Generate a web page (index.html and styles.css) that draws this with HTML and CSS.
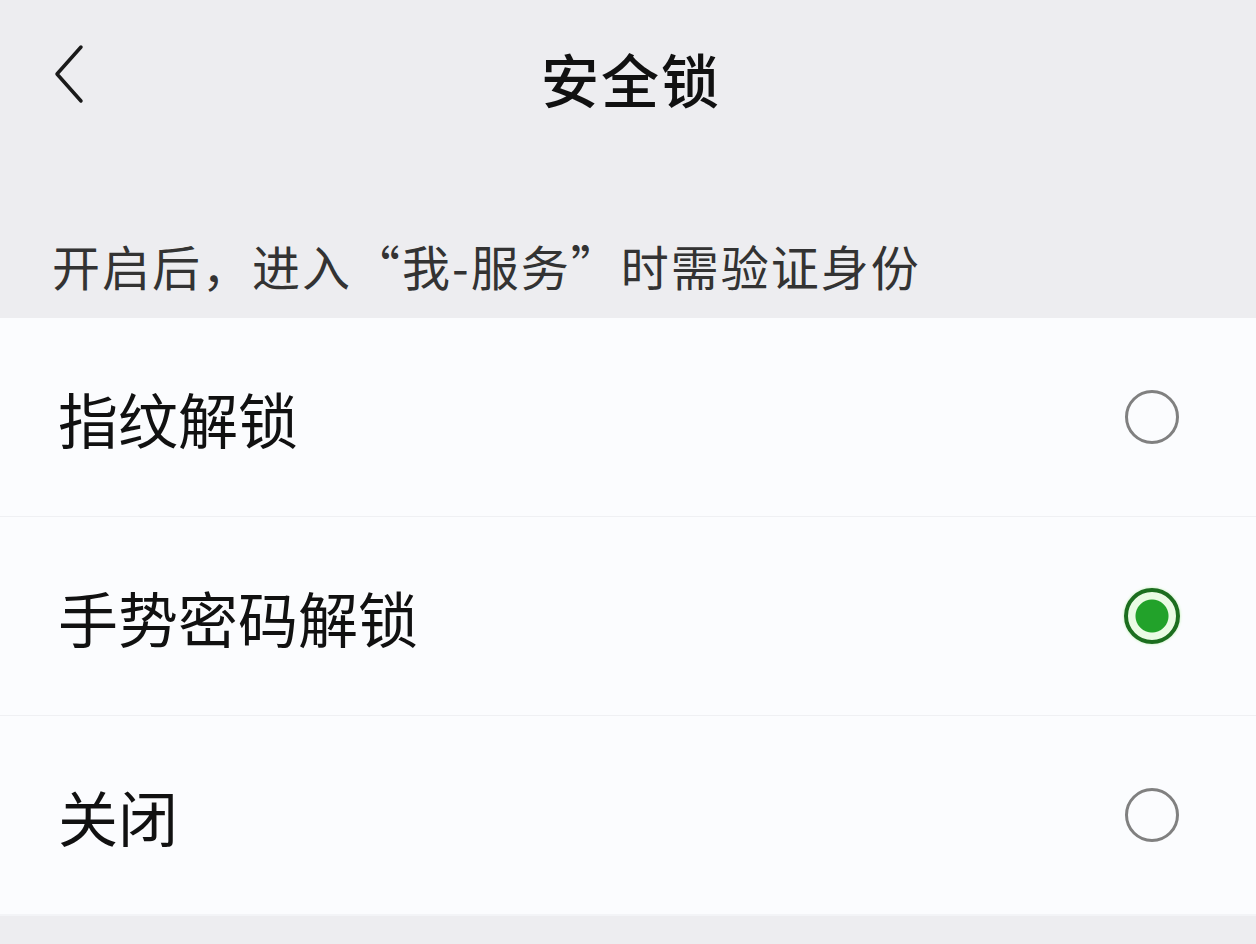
FILE: index.html
```html
<!DOCTYPE html>
<html lang="zh-CN">
<head>
    <meta charset="UTF-8">
    <title>安全锁</title>
    <link rel="stylesheet" href="styles.css">
</head>
<body>

    <header class="nav">
        <svg class="back" width="40" height="64" viewBox="0 0 40 64">
            <path d="M32 5 L8 32 L32 59" fill="none" stroke="#1a1a1a" stroke-width="3.5" stroke-linecap="round" stroke-linejoin="round"/>
        </svg>
        <h1 class="title">安全锁</h1>
    </header>

    <div class="hint">开启后，进入<span class="fw">“</span>我-服务<span class="fw">”</span>时需验证身份</div>

    <ul class="options">
        <li class="option">
            <span class="label">指纹解锁</span>
            <span class="radio"></span>
        </li>
        <li class="option">
            <span class="label">手势密码解锁</span>
            <span class="radio checked"></span>
        </li>
        <li class="option">
            <span class="label">关闭</span>
            <span class="radio"></span>
        </li>
    </ul>

</body>
</html>
```

FILE: styles.css
```css
body {
    margin: 0;
    background-color: #ededf0;
    font-family: "Noto Sans CJK SC", "Noto Sans", sans-serif;
    color: #111;
}
.nav {
    height: 155px;
    display: flex;
    align-items: center;
    justify-content: center;
    position: relative;
}
.back {
    position: absolute;
    left: 49px;
    top: 42px;
}
.title {
    margin: 0 0 0 6px;
    font-size: 58px;
    font-weight: 500;
    letter-spacing: 2px;
    color: #111;
}
.hint {
    height: 163px;
    box-sizing: border-box;
    padding: 80px 0 0 52px;
    font-size: 48px;
    line-height: 60px;
    letter-spacing: 2px;
    color: #333;
}
.fw {
    font-feature-settings: "fwid" 1;
}
.options {
    list-style: none;
    margin: 0;
    padding: 0;
    background-color: #fbfcfe;
    border-bottom: 2px solid #f3f4f7;
}
.option {
    height: 198px;
    display: flex;
    align-items: center;
    justify-content: space-between;
    padding: 0 77px 0 58px;
    border-bottom: 1px solid #eff0f3;
}
.option:last-child {
    border-bottom: none;
}
.label {
    font-size: 60px;
    color: #111;
}
.radio {
    width: 54px;
    height: 54px;
    border-radius: 50%;
    border: 3px solid #808080;
    box-sizing: border-box;
}
.radio.checked {
    width: 56px;
    height: 56px;
    margin-right: -1px;
    border: 4px solid #1c6e1f;
    background: radial-gradient(circle, #22a22a 0 16px, #eafbe4 17px);
    box-shadow: 0 0 3px #b8f0a8;
}
```
